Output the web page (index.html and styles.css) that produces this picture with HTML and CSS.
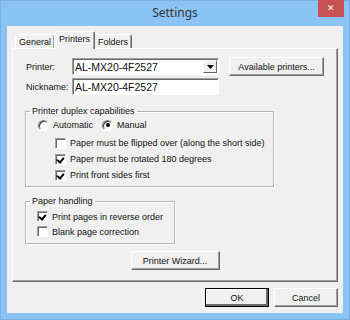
FILE: index.html
```html
<html>
  <head>
    <title>Settings</title>
    <link rel="stylesheet" href="styles.css">
  </head>
  <body>
    <div class="window">
      <div class="titlebar">
        <span></span>
        <span class="title">Settings</span>
        <span class="close">&#x2715;</span>
      </div>

      <div class="client">
        <div class="tabs">
          <span class="tab">General</span>
          <span class="tab active">Printers</span>
          <span class="tab">Folders</span>
        </div>

        <div class="panel">
          <div class="row first">
            <span class="label">Printer:</span>
            <span class="field combo">
              <span class="value">AL-MX20-4F2527</span>
              <span class="drop"><svg width="7" height="4" viewBox="0 0 7 4"><path d="M0 0h7L3.5 4z" fill="#000"/></svg></span>
            </span>
            <span class="btn avail">Available printers...</span>
          </div>
          <div class="row">
            <span class="label">Nickname:</span>
            <span class="field"><span class="value">AL-MX20-4F2527</span></span>
          </div>

          <fieldset class="group duplex">
            <legend>Printer duplex capabilities</legend>
            <div class="line radios">
              <span class="radio"></span><span class="text">Automatic</span>
              <span class="radio on"></span><span class="text">Manual</span>
            </div>
            <div class="line sub"><span class="check"></span><span class="text">Paper must be flipped over (along the short side)</span></div>
            <div class="line sub"><span class="check on"></span><span class="text">Paper must be rotated 180 degrees</span></div>
            <div class="line sub"><span class="check on"></span><span class="text">Print front sides first</span></div>
          </fieldset>

          <fieldset class="group handling">
            <legend>Paper handling</legend>
            <div class="line"><span class="check on"></span><span class="text">Print pages in reverse order</span></div>
            <div class="line"><span class="check"></span><span class="text">Blank page correction</span></div>
          </fieldset>

          <div class="wizard">
            <span class="btn wiz">Printer Wizard...</span>
          </div>
        </div>

        <div class="footer">
          <span class="btn ok default">OK</span>
          <span class="btn ok">Cancel</span>
        </div>
      </div>
    </div>
  </body>
</html>
```

FILE: styles.css
```css
html, body {
  margin: 0;
  padding: 0;
}

.window {
  width: 350px;
  height: 320px;
  box-sizing: border-box;
  background: #8ac4f5;
  border: 1px solid #78b0e0;
  display: flex;
  flex-direction: column;
  font-family: "Liberation Sans", Arial, sans-serif;
  font-size: 9px;
  color: #111;
}

.titlebar {
  height: 25px;
  display: grid;
  grid-template-columns: 1fr auto 1fr;
  align-items: start;
}
.title {
  font-family: "Noto Sans", "Open Sans", sans-serif;
  font-size: 12px;
  color: #333;
  line-height: 24px;
}
.close {
  justify-self: end;
  width: 26px;
  height: 17px;
  margin-top: -1px;
  margin-right: 5px;
  background: #c75050;
  color: #fff;
  font-size: 9px;
  line-height: 17px;
  text-align: center;
}

.client {
  margin: 0 6px;
  height: 287px;
  background: #f0f0f0;
  padding: 5px 5px 0 5px;
  box-sizing: border-box;
}

/* tabs */
.tabs {
  display: flex;
  align-items: flex-end;
  height: 17px;
  padding-left: 3px;
  position: relative;
  z-index: 1;
}
.tab {
  height: 13px;
  line-height: 14px;
  padding: 0 3px;
  border: 1px solid #fff;
  border-bottom: none;
  border-right-color: #696969;
  box-shadow: inset -1px 0 #a0a0a0;
  border-radius: 2px 2px 0 0;
  background: #f0f0f0;
}
.tab.active {
  height: 17px;
  line-height: 15px;
  margin: 0 -1px 0 -1px;
  padding: 0 4px;
  position: relative;
  top: 1px;
}

.panel {
  height: 234px;
  box-sizing: border-box;
  border: 1px solid #fff;
  border-right-color: #696969;
  border-bottom-color: #696969;
  box-shadow: inset -1px -1px #a0a0a0;
  padding: 8px 12px 0 12px;
}

.row {
  display: flex;
  align-items: center;
}
.row.first {
  height: 19px;
}
.row + .row {
  margin-top: 2px;
}
.label {
  width: 46px;
  padding-left: 1px;
}
.field {
  width: 147px;
  height: 17px;
  box-sizing: border-box;
  background: #fff;
  border: 1px solid #a0a0a0;
  border-right-color: #fff;
  border-bottom-color: #fff;
  box-shadow: inset 1px 1px #696969;
  display: flex;
  align-items: center;
}
.value {
  flex: 1;
  font-size: 10.5px;
  padding-left: 2px;
  padding-top: 1px;
}
.drop {
  width: 14px;
  height: 13px;
  margin-right: 1px;
  box-sizing: border-box;
  background: #f0f0f0;
  border: 1px solid #fff;
  border-right-color: #696969;
  border-bottom-color: #696969;
  display: flex;
  align-items: center;
  justify-content: center;
}

.btn {
  box-sizing: border-box;
  height: 19px;
  display: inline-flex;
  align-items: center;
  justify-content: center;
  background: #f0f0f0;
  border: 1px solid #fff;
  border-right-color: #696969;
  border-bottom-color: #696969;
  box-shadow: inset -1px -1px #a0a0a0;
}
.avail {
  width: 95px;
  margin-left: 10px;
}
.wiz {
  width: 89px;
}
.ok {
  width: 64px;
}
.default {
  outline: 1px solid #000;
  outline-offset: -1px;
  box-shadow: inset -2px -2px #696969, inset 1px 1px #fff;
}

/* group boxes */
.group {
  margin: 0;
  padding: 0;
  border: 1px solid #b4b4b4;
  box-shadow: 1px 1px #fff, inset 1px 1px #fff;
}
.group legend {
  padding: 0 2px;
  margin-left: 4px;
  line-height: 11px;
}
.duplex {
  width: 249px;
  box-sizing: border-box;
  margin-top: 11px;
  padding: 0 0 3px 0;
}
.handling {
  width: 150px;
  box-sizing: border-box;
  margin-top: 9px;
  padding: 2px 0 4px 0;
}

.line {
  height: 16px;
  display: flex;
  align-items: center;
  padding-left: 11px;
}
.line.sub {
  padding-left: 29px;
}
.duplex .radios {
  padding-left: 12px;
  margin-bottom: 2px;
}
.handling .line {
  height: 15px;
}
.text {
  margin-left: 4px;
}
.radios .text + .radio {
  margin-left: 9px;
}

.check {
  width: 11px;
  height: 11px;
  box-sizing: border-box;
  background: #fff;
  border: 1px solid #a0a0a0;
  border-right-color: #fff;
  border-bottom-color: #fff;
  box-shadow: inset 1px 1px #696969;
  position: relative;
}
.check.on::after {
  content: "";
  position: absolute;
  left: 2px;
  top: 1px;
  width: 3px;
  height: 5px;
  border: solid #000;
  border-width: 0 2px 2px 0;
  transform: rotate(40deg);
}

.radio {
  width: 11px;
  height: 11px;
  box-sizing: border-box;
  border-radius: 50%;
  background: #fff;
  border: 1px solid #fff;
  border-top-color: #808080;
  border-left-color: #808080;
  box-shadow: inset 1px 1px #404040;
  display: inline-flex;
  align-items: center;
  justify-content: center;
}
.radio.on::after {
  content: "";
  width: 4px;
  height: 4px;
  border-radius: 50%;
  background: #000;
}

.wizard {
  display: flex;
  justify-content: center;
  margin-top: 7px;
}

.footer {
  display: flex;
  justify-content: flex-end;
  gap: 5px;
  margin-top: 6px;
}
```
